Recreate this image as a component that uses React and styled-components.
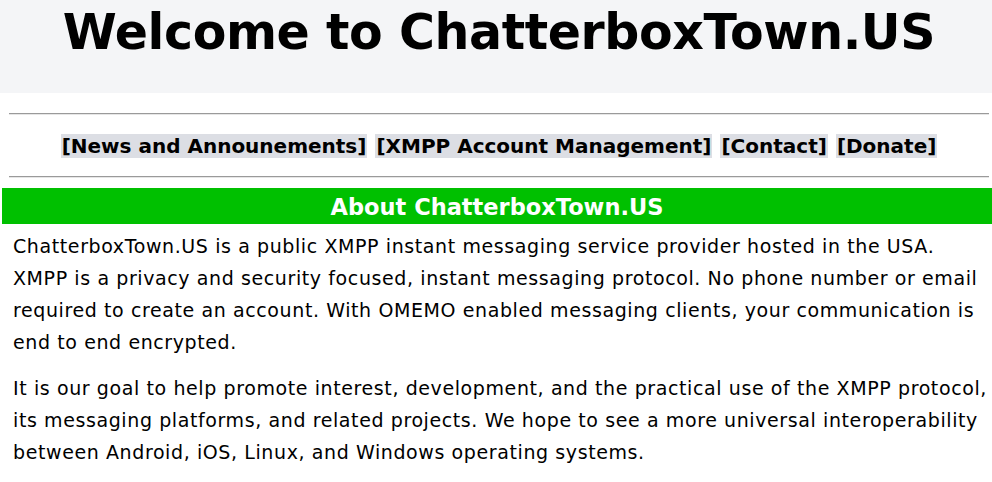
import React from "react";
import styled, { createGlobalStyle } from "styled-components";

const GlobalStyle = createGlobalStyle`
    body {
        margin: 0;
        background: #ffffff;
        font-family: "DejaVu Sans", Verdana, sans-serif;
        color: #000;
    }
`

const Header = styled.header`
    background: #f4f5f7;
    height: 93px;
    display: flex;
    justify-content: center;
`

const Title = styled.h1`
    margin: 0;
    padding: 2px 0 0 6px;
    font-size: 49px;
    letter-spacing: -0.4px;
    font-weight: bold;
    line-height: 62px;
`

const NavSection = styled.nav`
    padding: 20px 3px 0 9px;
`

const Rule = styled.hr`
    margin: 0;
    border: none;
    border-top: 1px solid #9a9a9a;
    border-bottom: 1px solid #e6e6e6;
    height: 0;
`

const NavRow = styled.div`
    display: flex;
    justify-content: center;
    gap: 8px;
    padding: 19px 0 18px;
`

const NavLink = styled.a`
    background: #dcdee4;
    color: #000;
    text-decoration: none;
    font-size: 20px;
    font-weight: bold;
    line-height: 24px;
    padding: 0 1px;
`

const Section = styled.section`
    margin: 10px 0 0 2px;
`

const SectionTitle = styled.h2`
    margin: 0;
    background: #00c000;
    color: #fff;
    text-align: center;
    font-size: 22.5px;
    font-weight: bold;
    height: 36px;
    line-height: 38px;
`

const Paragraph = styled.p`
    margin: 6px 0 14px;
    padding: 0 0 0 11px;
    font-size: 19px;
    letter-spacing: 0.6px;
    line-height: 32px;
    white-space: nowrap;
`

const links = [
    "News and Announements",
    "XMPP Account Management",
    "Contact",
    "Donate",
]

const paragraphs = [
    [
        "ChatterboxTown.US is a public XMPP instant messaging service provider hosted in the USA.",
        "XMPP is a privacy and security focused, instant messaging protocol. No phone number or email",
        "required to create an account. With OMEMO enabled messaging clients, your communication is",
        "end to end encrypted.",
    ],
    [
        "It is our goal to help promote interest, development, and the practical use of the XMPP protocol,",
        "its messaging platforms, and related projects. We hope to see a more universal interoperability",
        "between Android, iOS, Linux, and Windows operating systems.",
    ],
]

export default function App() {
    return (
        <>
            <GlobalStyle />
            <Header>
                <Title>Welcome to ChatterboxTown.US</Title>
            </Header>
            <NavSection>
                <Rule />
                <NavRow>
                    {links.map(l => (
                        <NavLink key={l} href="#">[{l}]</NavLink>
                    ))}
                </NavRow>
                <Rule />
            </NavSection>
            <Section>
                <SectionTitle>About ChatterboxTown.US</SectionTitle>
                {paragraphs.map((lines, i) => (
                    <Paragraph key={i}>
                        {lines.map((line, j) => (
                            <React.Fragment key={j}>
                                {line}
                                {j < lines.length - 1 && <br />}
                            </React.Fragment>
                        ))}
                    </Paragraph>
                ))}
            </Section>
        </>
    )
}
